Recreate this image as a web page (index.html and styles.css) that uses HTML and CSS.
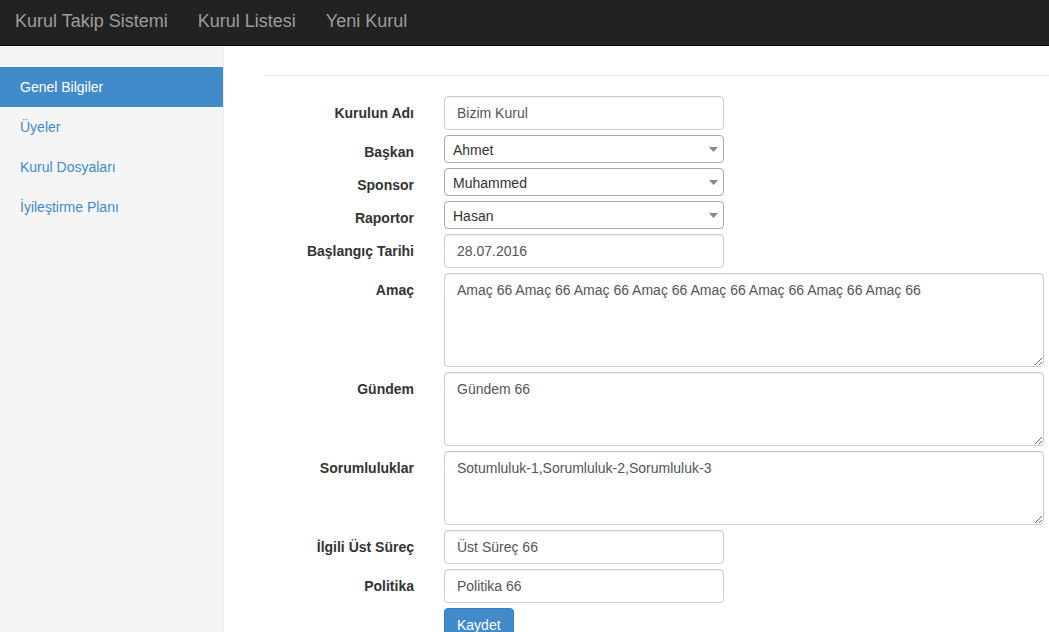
FILE: index.html
```html
<!DOCTYPE html>
<html lang="tr">
<head>
<meta charset="utf-8">
<title>Kurul Takip Sistemi</title>
<link rel="stylesheet" href="styles.css">
</head>
<body>
<nav class="navbar">
  <a class="brand" href="#">Kurul Takip Sistemi</a>
  <a class="nav-link" href="#">Kurul Listesi</a>
  <a class="nav-link" href="#">Yeni Kurul</a>
</nav>
<div class="layout">
  <aside class="sidebar">
    <ul class="side-nav">
      <li class="active"><a href="#">Genel Bilgiler</a></li>
      <li><a href="#">Üyeler</a></li>
      <li><a href="#">Kurul Dosyaları</a></li>
      <li><a href="#">İyileştirme Planı</a></li>
    </ul>
  </aside>
  <main class="main">
    <hr class="divider">
    <form class="form">
      <label class="lbl">Kurulun Adı</label>
      <div class="ctl"><input class="input" type="text" value="Bizim Kurul"></div>

      <label class="lbl">Başkan</label>
      <div class="ctl"><div class="select-wrap"><select class="select"><option>Ahmet</option></select><svg class="caret" width="9" height="5" viewBox="0 0 9 5"><path d="M0 0h9L4.5 5z" fill="#888"/></svg></div></div>

      <label class="lbl">Sponsor</label>
      <div class="ctl"><div class="select-wrap"><select class="select"><option>Muhammed</option></select><svg class="caret" width="9" height="5" viewBox="0 0 9 5"><path d="M0 0h9L4.5 5z" fill="#888"/></svg></div></div>

      <label class="lbl">Raportor</label>
      <div class="ctl"><div class="select-wrap"><select class="select"><option>Hasan</option></select><svg class="caret" width="9" height="5" viewBox="0 0 9 5"><path d="M0 0h9L4.5 5z" fill="#888"/></svg></div></div>

      <label class="lbl">Başlangıç Tarihi</label>
      <div class="ctl"><input class="input" type="text" value="28.07.2016"></div>

      <label class="lbl">Amaç</label>
      <div class="ctl"><textarea class="textarea ta-lg">Amaç 66 Amaç 66 Amaç 66 Amaç 66 Amaç 66 Amaç 66 Amaç 66 Amaç 66</textarea></div>

      <label class="lbl">Gündem</label>
      <div class="ctl"><textarea class="textarea ta-md">Gündem 66</textarea></div>

      <label class="lbl">Sorumluluklar</label>
      <div class="ctl"><textarea class="textarea ta-md">Sotumluluk-1,Sorumluluk-2,Sorumluluk-3</textarea></div>

      <label class="lbl">İlgili Üst Süreç</label>
      <div class="ctl"><input class="input" type="text" value="Üst Süreç 66"></div>

      <label class="lbl">Politika</label>
      <div class="ctl"><input class="input" type="text" value="Politika 66"></div>

      <div class="lbl"></div>
      <div class="ctl"><button class="btn" type="button">Kaydet</button></div>
    </form>
  </main>
</div>
</body>
</html>
```
FILE: styles.css
```css
html, body {
  height: 100%;
  overflow: hidden;
}
body {
  margin: 0;
  font-family: "Liberation Sans", Arial, sans-serif;
  font-size: 14px;
  line-height: 20px;
  color: #333;
  background: #fff;
}
a { text-decoration: none; }

.navbar {
  display: flex;
  height: 46px;
  box-sizing: border-box;
  background: #222;
  border-bottom: 1px solid #080808;
}
.brand, .nav-link {
  font-size: 18px;
  line-height: 20px;
  color: #9d9d9d;
  padding: 11px 15px 0;
}

.layout {
  display: flex;
  height: calc(100% - 46px);
}
.sidebar {
  width: 224px;
  flex: none;
  box-sizing: border-box;
  background: #f5f5f5;
  border-right: 1px solid #eee;
  padding-top: 21px;
}
.side-nav {
  list-style: none;
  margin: 0;
  padding: 0;
}
.side-nav a {
  display: block;
  padding: 10px 20px;
  color: #428bca;
}
.side-nav .active a {
  background: #428bca;
  color: #fff;
}

.main {
  flex: 1;
  min-width: 0;
  padding: 29px 5px 0 40px;
}
.divider {
  margin: 0 -5px 20px 0;
  border: 0;
  border-top: 1px solid #eee;
  height: 0;
}

.form {
  display: grid;
  grid-template-columns: 150px 1fr;
  column-gap: 30px;
  row-gap: 5px;
}
.lbl {
  text-align: right;
  font-weight: bold;
  padding-top: 7px;
}

.input, .select, .textarea {
  font-family: "Liberation Sans", Arial, sans-serif;
  font-size: 14px;
  line-height: 20px;
  color: #555;
  background: #fff;
  box-sizing: border-box;
  margin: 0;
}
.input {
  display: block;
  width: 280px;
  height: 34px;
  padding: 6px 12px;
  border: 1px solid #ccc;
  border-radius: 4px;
  box-shadow: inset 0 1px 1px rgba(0,0,0,0.075);
}
.select-wrap {
  position: relative;
  width: 280px;
}
.select {
  display: block;
  width: 280px;
  height: 28px;
  padding: 4px 8px 3px;
  border: 1px solid #a9a9a9;
  border-radius: 4px;
  -webkit-appearance: none;
  appearance: none;
  color: #333;
}
.caret {
  position: absolute;
  right: 6px;
  top: 12px;
  pointer-events: none;
}
.textarea {
  display: block;
  width: 100%;
  padding: 6px 12px;
  border: 1px solid #ccc;
  border-radius: 4px;
  box-shadow: inset 0 1px 1px rgba(0,0,0,0.075);
  resize: vertical;
}
.ta-lg { height: 94px; }
.ta-md { height: 74px; }

.btn {
  font-family: "Liberation Sans", Arial, sans-serif;
  font-size: 14px;
  line-height: 20px;
  color: #fff;
  background: #428bca;
  border: 1px solid #357ebd;
  border-radius: 4px;
  padding: 6px 12px;
  margin: 0;
}
```
